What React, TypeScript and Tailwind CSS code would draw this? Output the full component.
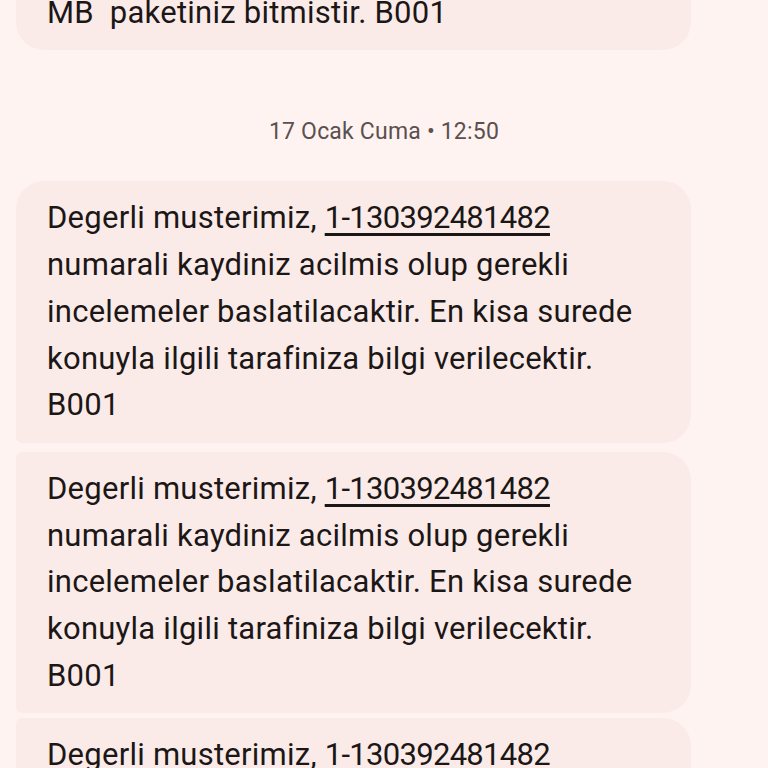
import React from 'react';

const LINK = '1-130392481482';

function Bubble({ lines, className }: { lines: React.ReactNode[]; className: string }) {
  return (
    <div className={`w-[675px] bg-[#fbebe8] pl-[31px] pr-4 py-[14px] ${className}`}>
      {lines.map((l, i) => (
        <div key={i} className="whitespace-pre leading-[46.7px]">
          {l}
        </div>
      ))}
    </div>
  );
}

function Register() {
  return [
    <>
      Degerli musterimiz,{' '}
      <span className="tracking-[-0.7px] underline decoration-[2.5px] underline-offset-[5px]">{LINK}</span>
    </>,
    'numarali kaydiniz acilmis olup gerekli',
    'incelemeler baslatilacaktir. En kisa surede',
    'konuyla ilgili tarafiniza bilgi verilecektir.',
    'B001',
  ];
}

export default function App() {
  const lines = Register();
  return (
    <div
      className="h-[768px] w-[768px] overflow-hidden bg-[#fef3f1] text-[31px] tracking-[0.25px] text-[#1c1717]"
      style={{ fontFamily: 'Roboto, "Noto Sans", sans-serif' }}
    >
      <div className="flex flex-col pl-4">
        <Bubble
          className="mt-[-71px] rounded-[28px]"
          lines={['\u00a0', 'MB  paketiniz bitmistir. B001']}
        />
        <div className="flex h-[131px] items-center justify-center pr-4 pt-[33px] text-[23px] tracking-[0.2px] text-[#5b5050]">
          17 Ocak Cuma • 12:50
        </div>
        <Bubble className="rounded-tl-[28px] rounded-tr-[28px] rounded-br-[28px] rounded-bl-[6px]" lines={lines} />
        <Bubble className="mt-[9px] rounded-r-[28px] rounded-l-[6px]" lines={lines} />
        <Bubble className="mt-[5px] rounded-r-[28px] rounded-l-[6px]" lines={lines} />
      </div>
    </div>
  );
}
